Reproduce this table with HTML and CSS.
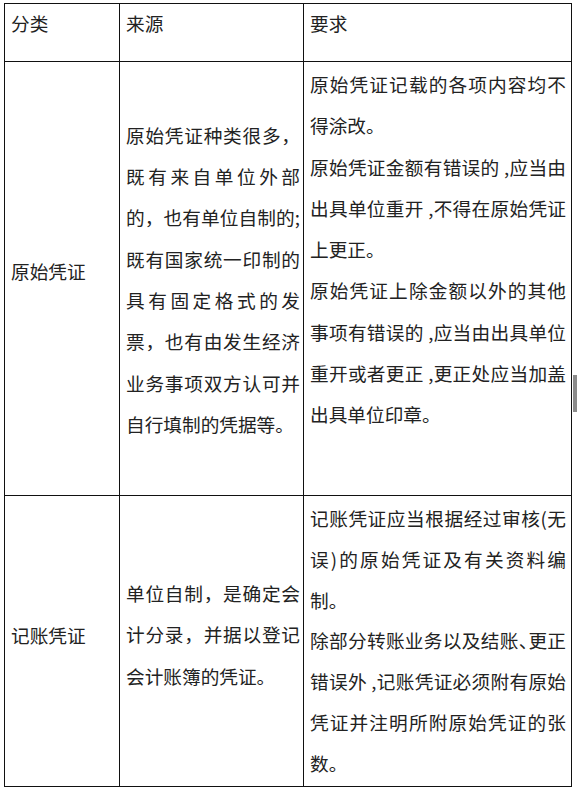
FILE: index.html
```html
<!DOCTYPE html>
<html lang="zh-CN">
<head>
<meta charset="utf-8">
<title>原始凭证与记账凭证</title>
<link rel="stylesheet" href="styles.css">
</head>
<body>
<table class="voucher">
  <colgroup><col class="c1"><col class="c2"><col class="c3"></colgroup>
  <tr class="head">
    <th>分类</th>
    <th>来源</th>
    <th>要求</th>
  </tr>
  <tr class="r1">
    <td class="cat">原始凭证</td>
    <td class="src">
      <span class="ln j">原始凭证种类很多，</span>
      <span class="ln j">既有来自单位外部</span>
      <span class="ln j">的，也有单位自制的;</span>
      <span class="ln j">既有国家统一印制的</span>
      <span class="ln j">具有固定格式的发</span>
      <span class="ln j">票，也有由发生经济</span>
      <span class="ln j">业务事项双方认可并</span>
      <span class="ln">自行填制的凭据等。</span>
    </td>
    <td class="req">
      <p class="para"><span class="ln j">原始凭证记载的各项内容均不</span><span class="ln">得涂改。</span></p>
      <p class="para"><span class="ln j">原始凭证金额有错误的 ,应当由</span><span class="ln j">出具单位重开 ,不得在原始凭证</span><span class="ln">上更正。</span></p>
      <p class="para"><span class="ln j">原始凭证上除金额以外的其他</span><span class="ln j">事项有错误的 ,应当由出具单位</span><span class="ln j">重开或者更正 ,更正处应当加盖</span><span class="ln">出具单位印章。</span></p>
    </td>
  </tr>
  <tr class="r2">
    <td class="cat">记账凭证</td>
    <td class="src">
      <span class="ln j">单位自制，是确定会</span>
      <span class="ln j">计分录，并据以登记</span>
      <span class="ln">会计账簿的凭证。</span>
    </td>
    <td class="req">
      <p class="para"><span class="ln j">记账凭证应当根据经过审核(无</span><span class="ln j">误)的原始凭证及有关资料编</span><span class="ln">制。</span></p>
      <p class="para"><span class="ln j">除部分转账业务以及结账<span class="halt">、</span>更正</span><span class="ln j">错误外 ,记账凭证必须附有原始</span><span class="ln j">凭证并注明所附原始凭证的张</span><span class="ln">数。</span></p>
    </td>
  </tr>
</table>
<div class="scroll-mark"></div>
</body>
</html>
```

FILE: styles.css
```css
html, body {
  margin: 0;
  background: #ffffff;
}

body {
  padding: 3px 0 0 4px;
  font-family: "Noto Sans CJK SC", "Microsoft YaHei", sans-serif;
  font-size: 18.67px;
  color: #222222;
}

.voucher {
  border-collapse: collapse;
  table-layout: fixed;
  width: 567px;
}

.c1 { width: 115px; }
.c2 { width: 184px; }
.c3 { width: 268px; }

.voucher th,
.voucher td {
  border: 1px solid #111111;
  padding: 0 3px 0 6px;
  font-weight: normal;
  text-align: left;
}

.head { height: 58px; }
.r1 { height: 434px; }
.r2 { height: 291px; }

.head th {
  vertical-align: top;
  padding-top: 5px;
  line-height: 28px;
}

.cat {
  vertical-align: middle;
  line-height: 28px;
}

.r1 .cat { padding-bottom: 15px; }
.r2 .cat { padding-bottom: 13px; }

.src {
  vertical-align: middle;
}

.r1 .src { padding-top: 1px; }
.r2 .src { padding-bottom: 14px; }

.req {
  vertical-align: top;
}

.voucher .req { padding-right: 5px; }

.r1 .req { padding-top: 1px; }
.r2 .req { padding-top: 2px; }

.para {
  margin: 0;
}

.ln {
  display: block;
  white-space: nowrap;
  line-height: 41.3px;
}

.r2 .req .ln {
  line-height: 40.8px;
}

.j {
  text-align: justify;
  text-align-last: justify;
}

.halt {
  font-feature-settings: "halt";
}

.scroll-mark {
  position: absolute;
  left: 573px;
  top: 375px;
  width: 4px;
  height: 37px;
  background: #8c8c8c;
}
```
